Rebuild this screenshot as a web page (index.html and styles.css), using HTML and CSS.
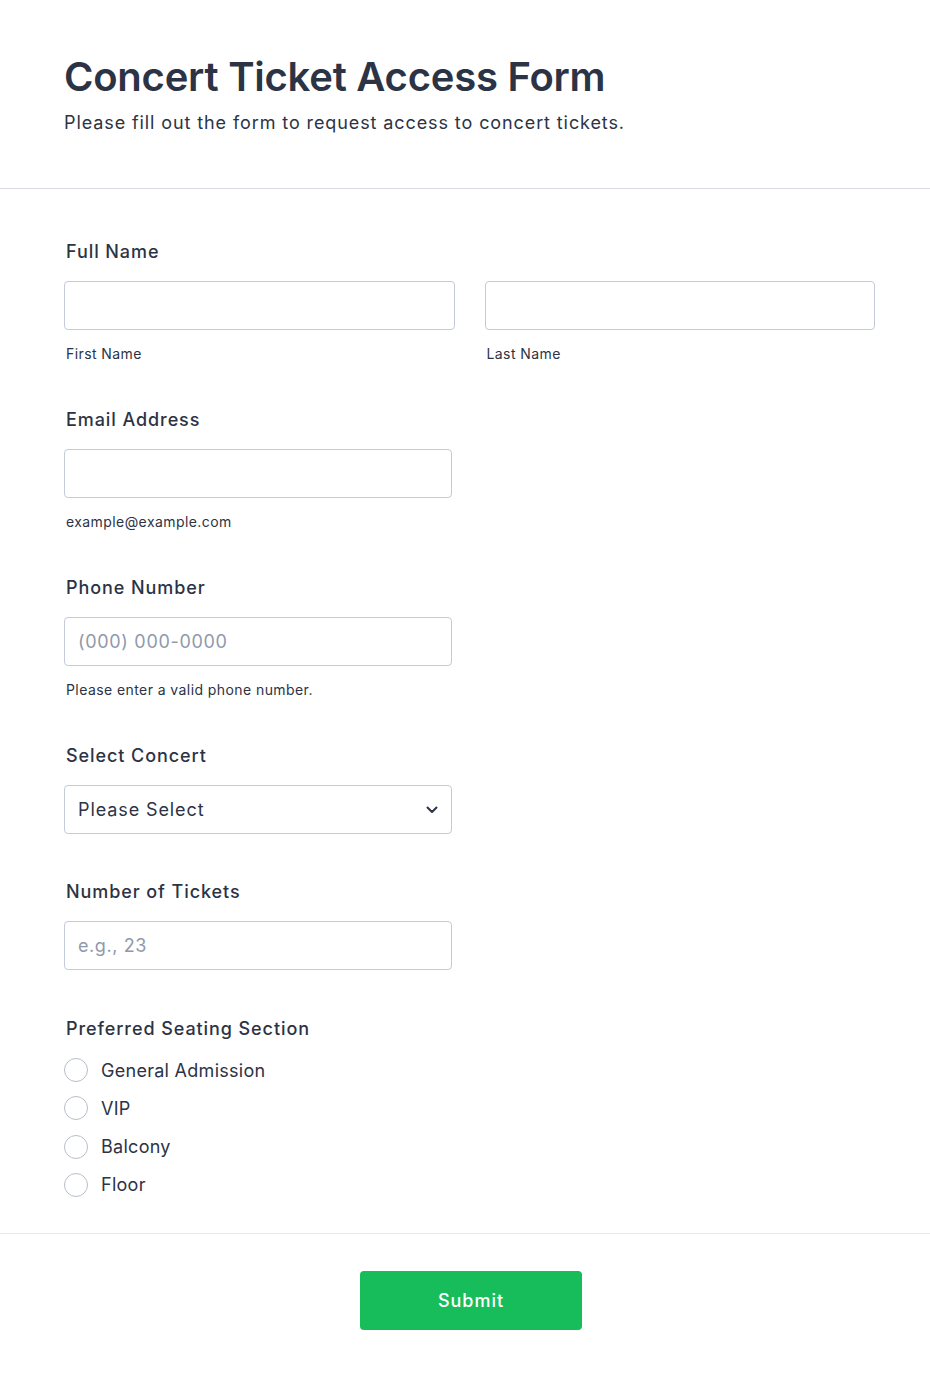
FILE: index.html
```html
<!DOCTYPE html>
<html lang="en">
<head>
<meta charset="utf-8">
<title>Concert Ticket Access Form</title>
<link rel="stylesheet" href="styles.css">
</head>
<body>
<header class="header">
  <h1 class="title">Concert Ticket Access Form</h1>
  <p class="subtitle">Please fill out the form to request access to concert tickets.</p>
</header>
<main class="form">
  <div class="field">
    <div class="label">Full Name</div>
    <div class="row-2">
      <div class="col">
        <input class="input" type="text">
        <div class="sublabel">First Name</div>
      </div>
      <div class="col">
        <input class="input" type="text">
        <div class="sublabel">Last Name</div>
      </div>
    </div>
  </div>
  <div class="field">
    <div class="label">Email Address</div>
    <div class="half">
      <input class="input" type="text">
      <div class="sublabel">example@example.com</div>
    </div>
  </div>
  <div class="field">
    <div class="label">Phone Number</div>
    <div class="half">
      <input class="input input-phone" type="text" placeholder="(000) 000-0000">
      <div class="sublabel">Please enter a valid phone number.</div>
    </div>
  </div>
  <div class="field field-select">
    <div class="label">Select Concert</div>
    <div class="half">
      <div class="select">
        <span class="select-text">Please Select</span>
        <svg class="chevron" width="12" height="8" viewBox="0 0 12 8"><path d="M1.5 1.5 L6 6 L10.5 1.5" fill="none" stroke="#2c3345" stroke-width="2" stroke-linecap="round" stroke-linejoin="round"/></svg>
      </div>
    </div>
  </div>
  <div class="field field-nosub">
    <div class="label">Number of Tickets</div>
    <div class="half">
      <input class="input input-num" type="text" placeholder="e.g., 23">
    </div>
  </div>
  <div class="field field-last">
    <div class="label">Preferred Seating Section</div>
    <div class="radios">
      <label class="radio"><span class="circle"></span><span>General Admission</span></label>
      <label class="radio"><span class="circle"></span><span>VIP</span></label>
      <label class="radio"><span class="circle"></span><span>Balcony</span></label>
      <label class="radio"><span class="circle"></span><span>Floor</span></label>
    </div>
  </div>
</main>
<footer class="footer">
  <button class="submit" type="button">Submit</button>
</footer>
</body>
</html>
```
FILE: styles.css
```css
* { box-sizing: border-box; }
body {
  margin: 0;
  background: #fff;
  font-family: Inter, "Noto Sans", sans-serif;
  color: #2c3345;
}
.header {
  padding: 53px 64px 53px;
  border-bottom: 1px solid #d8dae6;
}
.title {
  margin: 0;
  font-size: 40px;
  line-height: 48px;
  font-weight: 600;
  letter-spacing: -0.24px;
  color: #2c3345;
}
.subtitle {
  margin: 10px 0 0;
  font-size: 18px;
  line-height: 24px;
  letter-spacing: 0.9px;
  color: #2c3345;
}
.form {
  padding: 50px 55px 36px 64px;
  border-bottom: 1px solid #e6e9f0;
}
.field { margin-bottom: 44px; }
.field-select { margin-bottom: 45px; }
.field-nosub { margin-bottom: 46px; }
.field-last { margin-bottom: 0; }
.label {
  font-size: 18px;
  line-height: 24px;
  font-weight: 500;
  letter-spacing: 0.92px;
  padding-left: 2px;
  padding-top: 1px;
  margin-bottom: 17px;
}
.row-2 {
  display: grid;
  grid-template-columns: 1fr 1fr;
  column-gap: 30px;
}
.half { width: 388px; }
.input {
  display: block;
  width: 100%;
  height: 49px;
  border: 1px solid #c3cad8;
  border-radius: 4px;
  padding: 0 13px;
  font-family: inherit;
  font-size: 18px;
  color: #2c3345;
  background: #fff;
  outline: none;
}
.input-phone { letter-spacing: 0.68px; }
.input-num { letter-spacing: 0.58px; }
.input::placeholder { color: #8f99ab; }
.sublabel {
  margin-top: 15px;
  font-size: 14px;
  line-height: 18px;
  letter-spacing: 0.42px;
  padding-left: 2px;
  color: #2c3345;
}
.select {
  display: flex;
  align-items: center;
  justify-content: space-between;
  height: 49px;
  border: 1px solid #c3cad8;
  border-radius: 4px;
  padding: 0 13px 0 13px;
  font-size: 18px;
}
.select-text { letter-spacing: 0.9px; }
.radios {
  display: flex;
  flex-direction: column;
  gap: 14.3px;
}
.radio {
  display: flex;
  align-items: center;
  gap: 13px;
  height: 24px;
  font-size: 18px;
  letter-spacing: 0.28px;
}
.circle {
  width: 24px;
  height: 24px;
  border: 1px solid #b8bdc9;
  border-radius: 50%;
  flex: none;
}
.footer {
  padding: 37px 55px 50px 64px;
  display: flex;
  justify-content: center;
}
.submit {
  width: 222px;
  height: 59px;
  margin-left: 3px;
  background: #18bd5b;
  border: none;
  border-radius: 4px;
  color: #fff;
  font-family: inherit;
  font-size: 18px;
  font-weight: 500;
  letter-spacing: 1px;
}
```
